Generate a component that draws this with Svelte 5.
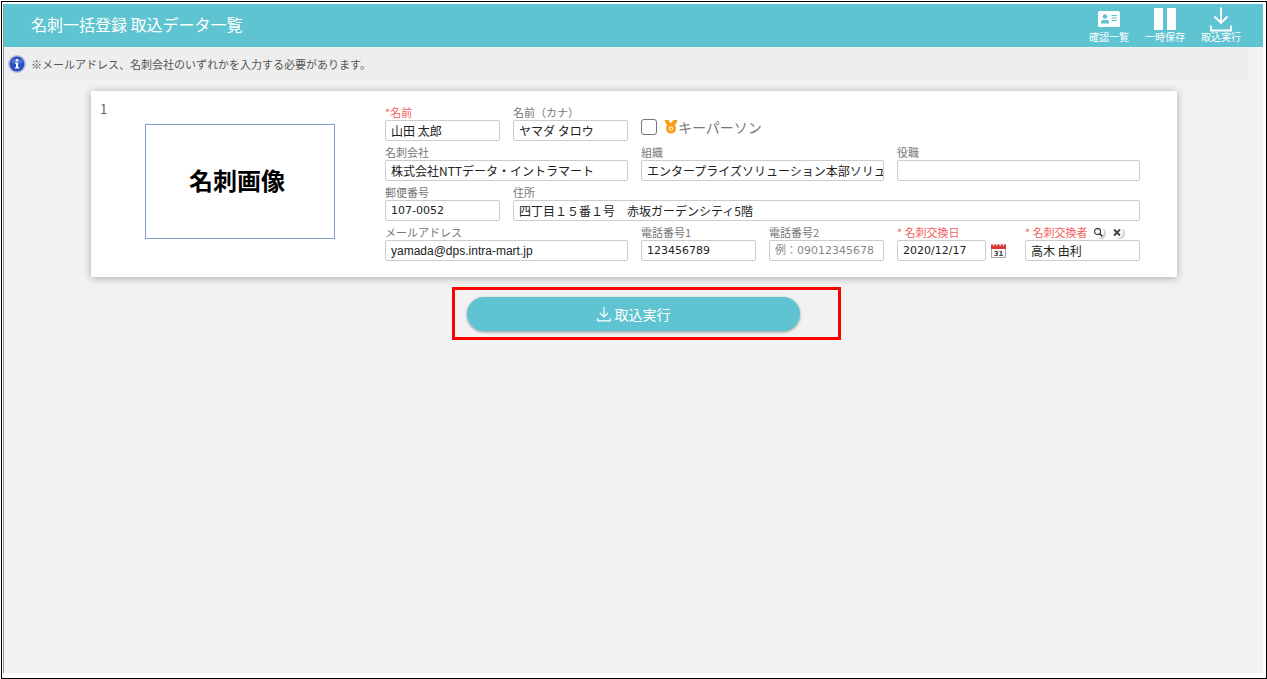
<script lang="ts">
  // ============================================================================
  // TYPES
  // ============================================================================

  interface Field {
    id: string;
    label: string;
    value: string;
    span: number;
    required?: boolean;
    placeholder?: string;
    font?: 'num' | 'latin';
  }

  // ============================================================================
  // STATE
  // ============================================================================

  let keyPerson = $state(false);

  let nameFields: Field[] = $state([
    { id: 'name', label: '名前', value: '山田 太郎', span: 1, required: true },
    { id: 'kana', label: '名前（カナ）', value: 'ヤマダ タロウ', span: 1 },
  ]);

  let detailFields: Field[] = $state([
    { id: 'company', label: '名刺会社', value: '株式会社NTTデータ・イントラマート', span: 2 },
    { id: 'section', label: '組織', value: 'エンタープライズソリューション本部ソリュ', span: 2 },
    { id: 'post', label: '役職', value: '', span: 2 },
    { id: 'zip', label: '郵便番号', value: '107-0052', span: 1, font: 'num' },
    { id: 'address', label: '住所', value: '四丁目１５番１号　赤坂ガーデンシティ5階', span: 5 },
    { id: 'mail', label: 'メールアドレス', value: 'yamada@dps.intra-mart.jp', span: 2, font: 'latin' },
    { id: 'tel1', label: '電話番号1', value: '123456789', span: 1, font: 'num' },
    { id: 'tel2', label: '電話番号2', value: '', span: 1, font: 'num', placeholder: '例：09012345678' },
  ]);

  let exchangeDate = $state('2020/12/17');
  let exchangeUser = $state('高木 由利');
</script>

{#snippet field(f: Field)}
  <div class="field span-{f.span}">
    <label for={f.id} class:required={f.required}>{f.required ? '*' : ''}{f.label}</label>
    <input id={f.id} class={f.font} type="text" placeholder={f.placeholder} bind:value={f.value} />
  </div>
{/snippet}

<div class="frame">
  <div class="page">
    <header>
      <h1>名刺一括登録 取込データ一覧</h1>
      <nav>
        <button type="button" class="tool">
          <svg width="22" height="26" viewBox="0 0 22 26">
            <rect x="0" y="5" width="22" height="16" rx="1.5" fill="#fff" />
            <circle cx="7" cy="10.5" r="2.3" fill="#5fc4d2" />
            <path d="M3 17.5v-1.2q0-2.3 2.3-2.3h3.4q2.3 0 2.3 2.3v1.2z" fill="#5fc4d2" />
            <path d="M13.5 9.5h5.5M13.5 12h5.5M13.5 14.5h5.5" stroke="#5fc4d2" stroke-width="1.1" />
          </svg>
          <span>確認一覧</span>
        </button>
        <button type="button" class="tool">
          <svg width="24" height="26" viewBox="0 0 24 26">
            <path d="M1 2h9v22H1zM14 2h9v22h-9z" fill="#fff" />
          </svg>
          <span>一時保存</span>
        </button>
        <button type="button" class="tool">
          <svg width="22" height="26" viewBox="0 0 22 26" fill="none" stroke="#fff" stroke-width="1.8">
            <path d="M11 1.5v15.5M4.5 10.5l6.5 6.5 6.5-6.5M1 19.5v5h20v-5" />
          </svg>
          <span>取込実行</span>
        </button>
      </nav>
    </header>

    <p class="notice">
      <svg width="18" height="18" viewBox="0 0 18 18">
        <circle cx="9" cy="9" r="9" fill="#b4bbd8" />
        <circle cx="9" cy="9" r="7.4" fill="#2b4fc0" />
        <path d="M3 7.5a6.2 5 0 0 1 12 0q-6 2.5-12 0z" fill="#6d8ce4" opacity="0.6" />
        <circle cx="9" cy="5.2" r="1.3" fill="#fff" />
        <path d="M7.3 7.6h2.8v4.6h1v1.4H7v-1.4h1V9h-.7z" fill="#fff" />
      </svg>
      ※メールアドレス、名刺会社のいずれかを入力する必要があります。
    </p>

    <main>
      <section class="card">
        <div class="number">1</div>
        <div class="picture">名刺画像</div>

        <form>
          {#each nameFields as f (f.id)}
            {@render field(f)}
          {/each}
          <label class="key-person">
            <input type="checkbox" bind:checked={keyPerson} />
            <svg width="14" height="14" viewBox="0 0 14 14">
              <path d="M0.5 0h4L7 3.6 9.500 0h4l-1.700 4.200-2 1.800H4.200l-2-1.800z" fill="#fb9f16" />
              <circle cx="7" cy="8.6" r="3.6" fill="#fff" stroke="#fb9f16" stroke-width="2.8" />
              <circle cx="7" cy="8.6" r="1.2" fill="#fb9f16" />
            </svg>
            <span>キーパーソン</span>
          </label>

          {#each detailFields as f (f.id)}
            {@render field(f)}
          {/each}

          <div class="field">
            <label for="date" class="required">* 名刺交換日</label>
            <div class="date">
              <input id="date" class="num" type="text" bind:value={exchangeDate} />
              <button type="button" class="icon" aria-label="カレンダー">
                <svg width="15" height="15" viewBox="0 0 15 15">
                  <rect x="0.5" y="2" width="14" height="12.5" fill="#fafafa" stroke="#aaa" />
                  <path d="M0 1.5h15V6H0z" fill="#d93a3a" />
                  <path d="M2.5 0v3M5.8 0v3M9.2 0v3M12.5 0v3" stroke="#eee" />
                  <text x="7.5" y="13" text-anchor="middle">31</text>
                </svg>
              </button>
            </div>
          </div>

          <div class="field">
            <div class="label-row">
              <label for="user" class="required">* 名刺交換者</label>
              <button type="button" class="icon round" aria-label="検索">
                <svg width="11" height="11" viewBox="0 0 11 11" fill="none" stroke="#444">
                  <circle cx="4.5" cy="4.5" r="3" stroke-width="1.3" />
                  <path d="M6.8 6.8l2.6 2.6" stroke-width="1.8" />
                </svg>
              </button>
              <button type="button" class="icon round" aria-label="クリア">
                <svg width="11" height="11" viewBox="0 0 11 11" stroke="#444" stroke-width="2">
                  <path d="M2 2.5l6 6M8 2.5l-6 6" />
                </svg>
              </button>
            </div>
            <input id="user" type="text" bind:value={exchangeUser} />
          </div>
        </form>
      </section>

      <div class="submit">
        <button type="button" class="run">
          <svg width="14" height="16" viewBox="0 0 14 16" fill="none" stroke="#fff" stroke-width="1.2">
            <path d="M7 1v10M3 7l4 4 4-4M0.8 12v2.8h12.4V12" />
          </svg>
          取込実行
        </button>
        <div class="highlight"></div>
      </div>
    </main>
  </div>
</div>

<style>
  :global(body) {
    background: #fff;
    font-family: "Noto Sans CJK JP", sans-serif;
  }

  .frame {
    box-sizing: border-box;
    display: flex;
    min-height: calc(100vh - 1px);
    margin: 1px 0 0 1px;
    padding: 2px 3px 5px 1px;
    border: 1px solid #000;
  }

  .page {
    flex: 1;
    min-width: 0;
    border-left: 1px solid #999;
    background: #f2f2f2;
  }

  button {
    padding: 0;
    border: 0;
    background: none;
    font-family: inherit;
    cursor: pointer;
  }

  svg {
    display: block;
    flex: none;
  }

  header {
    display: flex;
    justify-content: space-between;
    height: 43px;
    padding: 0 22px 0 27px;
    background: #5fc4d2;
    color: #fff;
  }

  h1 {
    margin: 0;
    font-size: 16px;
    font-weight: 400;
    line-height: 40px;
  }

  nav {
    display: flex;
    gap: 16px;
  }

  .tool {
    display: flex;
    flex-direction: column;
    align-items: center;
    width: 40px;
    padding-top: 2px;
    color: #fff;
    font-size: 10px;
    line-height: 10px;
    white-space: nowrap;
  }

  .notice {
    display: flex;
    align-items: center;
    gap: 5px;
    height: 32px;
    margin: 1px 14px 0 0;
    padding-left: 4px;
    background: #eee;
    color: #555;
    font-size: 11px;
  }

  .card {
    display: flex;
    margin: 11px 86px 0 87px;
    padding: 14px 37px 16px 9px;
    background: #fff;
    box-shadow: 0 1px 8px rgba(0, 0, 0, 0.3);
  }

  .number {
    width: 45px;
    color: #666;
    font-size: 13px;
    line-height: 8px;
  }

  .picture {
    box-sizing: border-box;
    display: flex;
    align-items: center;
    justify-content: center;
    width: 190px;
    height: 115px;
    margin: 19px 50px 0 0;
    padding: 0 6px 4px 0;
    border: 1px solid #7f9dcc;
    font-size: 24px;
    font-weight: 700;
  }

  form {
    display: grid;
    flex: 1;
    grid-template-columns: repeat(6, minmax(0, 1fr));
    gap: 4px 13px;
    min-width: 0;
  }

  .field {
    min-width: 0;
  }

  .span-2 {
    grid-column: span 2;
  }

  .span-5 {
    grid-column: span 5;
  }

  label {
    display: block;
    color: #777;
    font-size: 11px;
    line-height: 15px;
    white-space: nowrap;
  }

  .required {
    color: #f56060;
  }

  input[type="text"] {
    box-sizing: border-box;
    display: block;
    width: 100%;
    height: 21px;
    padding: 0 0 1px 5px;
    border: 1px solid #ccc;
    border-radius: 2px;
    background: #fff;
    color: #222;
    font-family: inherit;
    font-size: 12px;
  }

  input.num {
    padding-bottom: 0;
    font-family: "DejaVu Sans", "Noto Sans CJK JP", sans-serif;
    font-size: 11px;
  }

  input.latin {
    padding-bottom: 0;
    font-family: "Liberation Sans", sans-serif;
  }

  input::placeholder {
    color: #888;
  }

  .key-person {
    display: flex;
    grid-column: span 4;
    align-items: center;
    padding-top: 8px;
    font-size: 14px;
  }

  .key-person input {
    appearance: none;
    width: 16px;
    height: 16px;
    margin: 0 7px 0 0;
    border: 1px solid #767676;
    border-radius: 3px;
    background: #fff;
  }

  .key-person input:checked {
    background: #5fc4d2;
  }

  .date {
    display: flex;
    align-items: center;
    gap: 5px;
  }

  .date text {
    fill: #444;
    font-family: "DejaVu Sans", sans-serif;
    font-size: 7px;
    font-weight: 700;
  }

  .date .icon {
    margin-right: 6px;
  }

  .label-row {
    display: flex;
    align-items: center;
    gap: 8px;
    height: 15px;
  }

  .label-row label {
    margin-right: -3px;
  }

  .round {
    border-radius: 50%;
    box-shadow: 2px 1px 1px rgba(0, 0, 0, 0.2);
  }

  .submit {
    position: relative;
    width: 333px;
    margin: 20px auto 0;
  }

  .run {
    display: flex;
    align-items: center;
    justify-content: center;
    gap: 4px;
    width: 100%;
    height: 34px;
    border-radius: 17px;
    background: #5fc4d2;
    box-shadow: 0 1px 3px rgba(0, 0, 0, 0.4);
    color: #fff;
    font-size: 14px;
  }

  .highlight {
    position: absolute;
    inset: -10px -41px -9px -15px;
    border: 3px solid #f00;
    pointer-events: none;
  }
</style>
